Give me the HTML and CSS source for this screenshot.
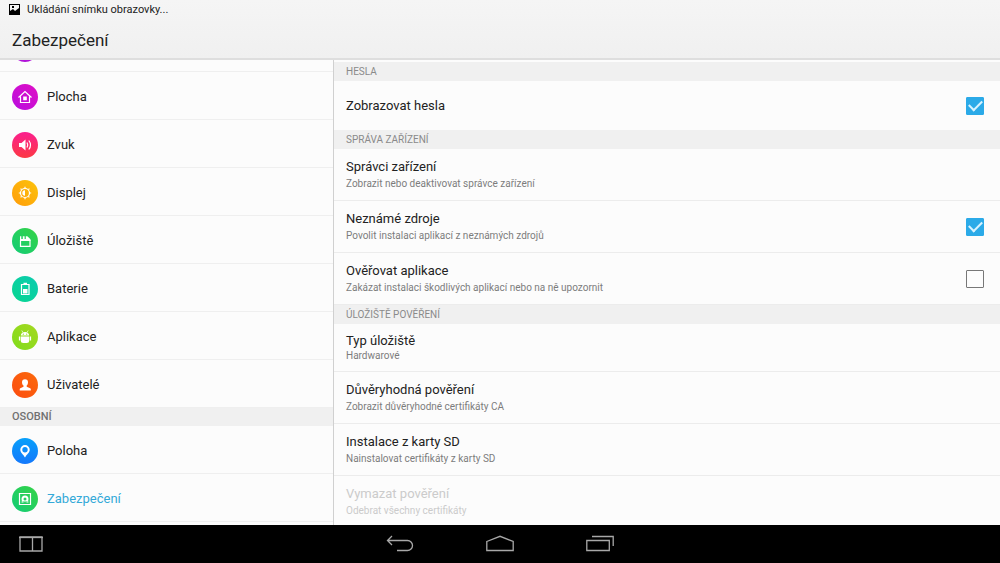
FILE: index.html
```html
<!DOCTYPE html>
<html lang="cs">
<head>
<meta charset="UTF-8" />
<meta name="viewport" content="width=device-width, initial-scale=1" />
<title>Zabezpečení</title>
<link rel="stylesheet" href="styles.css">
</head>
<body>

<header class="top">
  <div class="status">
    <svg width="11" height="11" viewBox="0 0 11 11"><path fill="#000" fill-rule="evenodd" d="M0 0h11v11H0zM1 1v6l3-2 2 2 4-3V1zM3 2h2v2H3z"/></svg>
    <span>Ukládání snímku obrazovky...</span>
  </div>
  <h1>Zabezpečení</h1>
</header>

<main class="panes">
  <nav class="sidebar">
    <div class="list">
      <div class="item"><span class="icon purple"></span></div>
      <a class="item" href="#plocha">
        <span class="icon magenta"><svg viewBox="0 0 26 26"><path d="M6.500 13.500 13 7.500l6.500 6M8.500 12.500v6h9v-6"/><path class="fill" d="M11.200 12.500h3.600v3.800h-3.600z"/></svg></span>Plocha
      </a>
      <a class="item" href="#zvuk">
        <span class="icon pink"><svg viewBox="0 0 26 26"><path class="fill" d="M7 11h2.500l4-3.500v11l-4-3.500H7z"/><path d="M15 10.500q1.500 2.500 0 5M16.800 8.500q3.400 4.500 0 9"/></svg></span>Zvuk
      </a>
      <a class="item" href="#displej">
        <span class="icon amber"><svg viewBox="0 0 26 26"><circle cx="13" cy="13" r="4.500"/><path class="fill" d="M13 10.300a2.700 2.700 0 0 0 0 5.400z"/><path d="M13 6.800v1.500M13 17.700v1.500M6.800 13h1.500M17.700 13h1.500M8.600 8.600l1 1M16.400 16.400l1 1M8.600 17.400l1-1M16.400 9.600l1-1"/></svg></span>Displej
      </a>
      <a class="item" href="#uloziste">
        <span class="icon green"><svg viewBox="0 0 26 26"><path d="M8.500 12.500h9.500v5.800H8.500z"/><path class="fill" d="M8 8.300h1.300v2.700h1.500V8.300h1.800V11h1.200V8.300h1.500l3.200 3v1.700H8z"/></svg></span>Úložiště
      </a>
      <a class="item" href="#baterie">
        <span class="icon teal"><svg viewBox="0 0 26 26"><path d="M9.500 8.500h7.500v10H9.500z"/><path class="fill" d="M11.500 6.800h3.500v2h-3.500zM11 13h4.500v4.500H11z"/></svg></span>Baterie
      </a>
      <a class="item" href="#aplikace">
        <span class="icon lime"><svg viewBox="0 0 26 26"><path class="fill" d="M8.800 11.600C9 9.300 10.500 8 13 8s4 1.300 4.200 3.600zM8.800 12.400h8.400v4q0 2.500-2.500 2.500h-3.400q-2.500 0-2.500-2.500zM6.900 12.400h1.300v4H6.900zM17.800 12.400h1.300v4h-1.300z"/><path class="thin" d="m9.800 6.500 1.200 2M16.200 6.500l-1.200 2"/><circle class="eye" cx="11.300" cy="10.200" r=".6"/><circle class="eye" cx="14.700" cy="10.200" r=".6"/></svg></span>Aplikace
      </a>
      <a class="item" href="#uzivatele">
        <span class="icon orange"><svg viewBox="0 0 26 26"><path class="fill" d="M13 7.300c2 0 3 1.200 3 3 0 1.500-.5 2.500-1.300 3.300v1.200l3.500 1.400q.6.300.6 1v1.300H7.700v-1.300q0-.7.600-1l3.200-1.400v-1.200C10.500 12.800 10 11.800 10 10.300c0-1.800 1-3 3-3z"/></svg></span>Uživatelé
      </a>
      <h2 class="group">OSOBNÍ</h2>
      <a class="item" href="#poloha">
        <span class="icon blue"><svg viewBox="0 0 26 26"><path class="fill" fill-rule="evenodd" d="M13 7a4.700 4.700 0 0 1 4.700 4.700c0 3-3 4.500-4.700 7.800-1.700-3.300-4.700-4.800-4.700-7.800A4.700 4.700 0 0 1 13 7zM13 9a2.700 2.700 0 1 0 0 5.400A2.700 2.700 0 0 0 13 9z"/></svg></span>Poloha
      </a>
      <a class="item active" href="#zabezpeceni">
        <span class="icon green"><svg viewBox="0 0 26 26"><path d="M7.500 7.500h11v11h-11z"/><path class="fill" fill-rule="evenodd" d="M13 9.500a3.500 3.500 0 1 0 0 7 3.500 3.500 0 0 0 0-7zM13 11.500a1.500 1.500 0 1 1 0 3 1.500 1.500 0 0 1 0-3zM9.500 15.500h7v1h-7z"/></svg></span>Zabezpečení
      </a>
    </div>
  </nav>

  <section class="content">
    <h2>HESLA</h2>
    <label class="row single">
      <span class="name">Zobrazovat hesla</span>
      <input type="checkbox" checked>
    </label>

    <h2>SPRÁVA ZAŘÍZENÍ</h2>
    <a class="row" href="#spravci">
      <span class="text">
        <span class="name">Správci zařízení</span>
        <span class="desc">Zobrazit nebo deaktivovat správce zařízení</span>
      </span>
    </a>
    <label class="row">
      <span class="text">
        <span class="name">Neznámé zdroje</span>
        <span class="desc">Povolit instalaci aplikací z neznámých zdrojů</span>
      </span>
      <input type="checkbox" checked>
    </label>
    <label class="row">
      <span class="text">
        <span class="name">Ověřovat aplikace</span>
        <span class="desc">Zakázat instalaci škodlivých aplikací nebo na ně upozornit</span>
      </span>
      <input type="checkbox">
    </label>

    <h2>ÚLOŽIŠTĚ POVĚŘENÍ</h2>
    <div class="row compact">
      <span class="text">
        <span class="name">Typ úložiště</span>
        <span class="desc">Hardwarové</span>
      </span>
    </div>
    <a class="row" href="#duveryhodna">
      <span class="text">
        <span class="name">Důvěryhodná pověření</span>
        <span class="desc">Zobrazit důvěryhodné certifikáty CA</span>
      </span>
    </a>
    <a class="row" href="#instalace">
      <span class="text">
        <span class="name">Instalace z karty SD</span>
        <span class="desc">Nainstalovat certifikáty z karty SD</span>
      </span>
    </a>
    <div class="row disabled">
      <span class="text">
        <span class="name">Vymazat pověření</span>
        <span class="desc">Odebrat všechny certifikáty</span>
      </span>
    </div>
  </section>
</main>

<footer class="navbar">
  <button class="split" type="button" aria-label="Rozdělit obrazovku">
    <svg width="24" height="16" viewBox="0 0 24 16"><path d="M1 1h22v14H1zM13.500 1v14"/><path d="M0 1.500h24"/></svg>
  </button>
  <div class="keys">
    <button type="button" aria-label="Zpět">
      <svg width="28" height="18" viewBox="0 0 28 18"><path d="M6 1 1.500 5.500 6 10M1.500 5.500H21.500a5 5 0 0 1 0 10H11"/></svg>
    </button>
    <button type="button" aria-label="Domů">
      <svg width="28" height="18" viewBox="0 0 28 18"><path d="M.8 6.500 14 1.300l13.200 5.200v9H.8z"/></svg>
    </button>
    <button type="button" aria-label="Poslední aplikace">
      <svg width="28" height="18" viewBox="0 0 28 18"><path d="M.8 5.500h22.500v10H.8zM6 1.500h21.200V11"/></svg>
    </button>
  </div>
</footer>

</body>
</html>
```

FILE: styles.css
```css
* {
  box-sizing: border-box;
}
body {
  display: flex;
  flex-direction: column;
  height: 100vh;
  margin: 0;
  background: #fcfcfc;
  color: #222;
  font-family: Roboto, sans-serif;
  font-size: 13px;
}
h1, h2 {
  margin: 0;
  font-weight: 400;
}
a {
  color: inherit;
  text-decoration: none;
}

/* status bar + title */
.top {
  flex: none;
  background: linear-gradient(#f5f5f5, #f0f0f0);
  border-bottom: 2px solid #dedede;
}
.status {
  display: flex;
  align-items: center;
  gap: 7px;
  height: 19px;
  padding-left: 9px;
  font-size: 11px;
}
.top h1 {
  padding: 3px 0 0 12px;
  font-size: 17px;
  line-height: 36px;
}

.panes {
  display: flex;
  flex: 1;
  min-height: 0;
}

/* left list, scrolled down a bit */
.sidebar {
  width: 33.4%;
  overflow: hidden;
  border-right: 1px solid #d0d0d0;
}
.list {
  margin-top: -36px;
}
.item {
  display: flex;
  align-items: center;
  gap: 9px;
  height: 48px;
  padding: 2px 0 0 12px;
  border-bottom: 1px solid #efefef;
}
.item.active {
  color: #33a9d8;
}
.group {
  padding-left: 12px;
  background: #f0f0f0;
  color: #707070;
  font-size: 11px;
  font-weight: 500;
  line-height: 18px;
}
.icon {
  width: 26px;
  height: 26px;
  border-radius: 50%;
}
.icon svg {
  display: block;
  fill: none;
  stroke: #fff;
  stroke-width: 1.2;
}
.icon .fill {
  fill: #fff;
  stroke: none;
}
.icon .thin {
  stroke-width: 0.7;
}
.icon .eye {
  fill: #94d91e;
  stroke: none;
}
.purple { background: #b012d8; }
.magenta { background: linear-gradient(45deg, #b80ee0, #e00fc4); }
.pink { background: linear-gradient(#fb1f8e, #fc3944); }
.amber { background: linear-gradient(45deg, #ff9c0a, #fcc40c); }
.green { background: linear-gradient(45deg, #12cc78, #36d345); }
.teal { background: linear-gradient(45deg, #08d690, #0ccbb0); }
.lime { background: linear-gradient(45deg, #80dc1c, #a5d820); }
.orange { background: linear-gradient(45deg, #fc4c10, #fb6a0c); }
.blue { background: linear-gradient(#08a0fa, #1478fc); }

/* right pane */
.content {
  flex: 1;
  overflow: hidden;
  padding-top: 2px;
}
.content h2 {
  padding-left: 12px;
  background: #f0f0f0;
  color: #8a8a8a;
  font-size: 10px;
  line-height: 19px;
}
.row {
  display: flex;
  align-items: center;
  justify-content: space-between;
  height: 52px;
  padding: 0 16px 0 12px;
  border-bottom: 1px solid #ececec;
}
.row.single {
  height: 49px;
  border-bottom: none;
}
.row.compact {
  height: 48px;
}
.text {
  display: flex;
  flex-direction: column;
  gap: 2px;
}
.compact .text {
  gap: 0;
}
.name {
  line-height: 16px;
}
.desc {
  color: #7c7c7c;
  font-size: 10px;
  line-height: 14px;
}
.disabled .name,
.disabled .desc {
  color: #cbcbcb;
}
input[type="checkbox"] {
  display: grid;
  place-items: center;
  appearance: none;
  width: 18px;
  height: 18px;
  margin: 0;
  border: 1px solid #777;
  border-radius: 1px;
}
input[type="checkbox"]:checked {
  border-color: #2baae8;
  background: #2baae8;
}
input[type="checkbox"]:checked::after {
  content: "";
  width: 11px;
  height: 6px;
  margin-bottom: 4px;
  border: solid #d8f3ff;
  border-width: 0 0 2px 2px;
  transform: rotate(-45deg);
}

/* system keys */
.navbar {
  display: grid;
  grid-template-columns: 1fr auto 1fr;
  align-items: center;
  flex: none;
  height: 38px;
  background: #000;
}
.navbar button {
  padding: 0;
  border: none;
  background: none;
  cursor: pointer;
}
.navbar svg {
  display: block;
  fill: none;
  stroke: #a8a8a8;
  stroke-width: 1.3;
}
.split {
  justify-self: start;
  margin-left: 19px;
}
.keys {
  display: flex;
  gap: 72px;
}
```
